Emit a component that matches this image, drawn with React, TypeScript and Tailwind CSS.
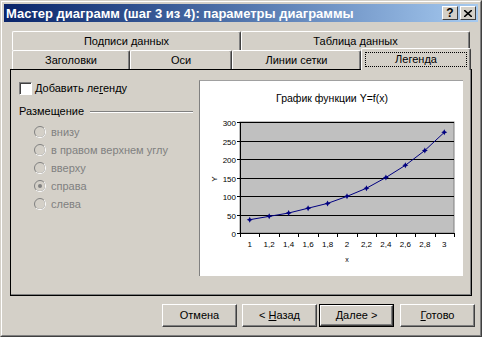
import React from "react";

const vals = [36, 45, 54, 67, 80, 99, 121, 150, 183, 223, 272];
const xLabels = ["1", "1,2", "1,4", "1,6", "1,8", "2", "2,2", "2,4", "2,6", "2,8", "3"];

function Chart() {
  const px0 = 40, pw = 214, py0 = 41, ph = 111;
  const cw = pw / 11;
  const pts = vals.map((v, i) => [px0 + cw * (i + 0.5), py0 + ph - (v * ph) / 300]);
  return (
    <svg width="263" height="195" className="block">
      <text x="132" y="21" fontSize="10.5" textAnchor="middle" fill="#000" fontFamily="Liberation Sans, Arial, sans-serif">График функции Y=f(x)</text>
      <rect x={px0} y={py0} width={pw} height={ph} fill="#C0C0C0" stroke="#808080" strokeWidth="1" />
      {[0, 1, 2, 3, 4, 5, 6].map((k) => (
        <g key={k}>
          <line x1={px0} x2={px0 + pw} y1={Math.round(py0 + k * 18.5) + 0.5} y2={Math.round(py0 + k * 18.5) + 0.5} stroke="#000" strokeWidth="1" />
          <line x1={px0 - 3} x2={px0} y1={Math.round(py0 + k * 18.5) + 0.5} y2={Math.round(py0 + k * 18.5) + 0.5} stroke="#000" strokeWidth="1" />
          <text x={px0 - 4} y={Math.round(py0 + k * 18.5) + 3.5} fontSize="8" textAnchor="end" fill="#000" fontFamily="Liberation Sans, Arial, sans-serif">{300 - k * 50}</text>
        </g>
      ))}
      <line x1={px0 + 0.5} x2={px0 + 0.5} y1={py0} y2={py0 + ph + 1} stroke="#000" />
      {Array.from({ length: 12 }).map((_, k) => (
        <line key={k} x1={Math.round(px0 + cw * k) + 0.5} x2={Math.round(px0 + cw * k) + 0.5} y1={py0 + ph} y2={py0 + ph + 4} stroke="#000" />
      ))}
      {xLabels.map((l, i) => (
        <text key={i} x={px0 + cw * (i + 0.5)} y={166} fontSize="8" textAnchor="middle" fill="#000" fontFamily="Liberation Sans, Arial, sans-serif">{l}</text>
      ))}
      <text x="0" y="0" fontSize="8" textAnchor="middle" fill="#000" fontFamily="Liberation Sans, Arial, sans-serif" transform="translate(17 98) rotate(-90)">Y</text>
      <text x="147" y="181" fontSize="7" textAnchor="middle" fill="#000" fontFamily="Liberation Sans, Arial, sans-serif">x</text>
      <polyline points={pts.map((p) => p.join(",")).join(" ")} fill="none" stroke="#000080" strokeWidth="1" />
      {pts.map(([x, y], i) => (
        <path key={i} d={`M${x},${y - 3} L${x + 1},${y - 1} L${x + 3},${y} L${x + 1},${y + 1} L${x},${y + 3} L${x - 1},${y + 1} L${x - 3},${y} L${x - 1},${y - 1} Z`} fill="#000080" />
      ))}
    </svg>
  );
}

function Radio({ label, checked }: { label: string; checked?: boolean }) {
  return (
    <div className="flex items-center h-[18px]">
      <svg width="12" height="12" className="ml-[15px] shrink-0">
        <circle cx="6" cy="6" r="5.5" fill="#D4D0C8" stroke="#808080" strokeWidth="1" />
        <path d="M2,10 A5.5 5.5 0 0 0 10 2" fill="none" stroke="#FFFFFF" strokeWidth="1" />
        {checked && <circle cx="6" cy="6" r="2" fill="#808080" />}
      </svg>
      <span className="ml-[5px] text-[#808080]">{label}</span>
    </div>
  );
}

function Tab({ w, label, className = "" }: { w: string; label: string; className?: string }) {
  return (
    <div className={`${w} h-[19px] flex items-center justify-center bg-[#D4D0C8] border-t border-l border-r border-t-white border-l-white border-r-[#404040] rounded-t-[2px] shadow-[inset_-1px_0_0_#808080] ${className}`}>
      {label}
    </div>
  );
}

function Btn({ children, def }: { children: React.ReactNode; def?: boolean }) {
  if (def) {
    return (
      <div className="w-[75px] h-[23px] border border-black">
        <div className="w-full h-full border border-t-white border-l-white border-r-[#404040] border-b-[#404040] shadow-[inset_-1px_-1px_0_#808080] flex items-center justify-center">
          <span className="whitespace-pre">{children}</span>
        </div>
      </div>
    );
  }
  return (
    <div className="w-[75px] h-[23px] border border-t-white border-l-white border-r-[#404040] border-b-[#404040] shadow-[inset_-1px_-1px_0_#808080] flex items-center justify-center">
      <span className="whitespace-pre">{children}</span>
    </div>
  );
}

export default function App() {
  return (
    <div className="w-[482px] h-[337px] bg-[#D4D0C8] border border-t-[#D4D0C8] border-l-[#D4D0C8] border-r-[#404040] border-b-[#404040] text-[11px] text-black leading-none" style={{ fontFamily: "'Liberation Sans', Arial, sans-serif" }}>
      <div className="h-full border border-t-white border-l-white border-r-[#808080] border-b-[#808080] p-[2px] flex flex-col">
        <div className="h-[18px] shrink-0 flex items-center bg-gradient-to-r from-[#0A246A] to-[#A6CAF0] pl-[2px] pr-[2px]">
          <span className="text-white font-bold text-[13px] flex-1">Мастер диаграмм (шаг 3 из 4): параметры диаграммы</span>
          <div className="w-[16px] h-[14px] bg-[#D4D0C8] border border-t-white border-l-white border-r-[#404040] border-b-[#404040] flex items-center justify-center font-bold text-[12px]">?</div>
          <div className="w-[16px] h-[14px] ml-[2px] bg-[#D4D0C8] border border-t-white border-l-white border-r-[#404040] border-b-[#404040] flex items-center justify-center">
            <svg width="8" height="7"><path d="M0,0 L8,7 M8,0 L0,7" stroke="#000" strokeWidth="1.6" /></svg>
          </div>
        </div>
        <div className="mt-[9px] ml-[6px] w-[462px] flex flex-col">
          <div className="flex ml-[2px]">
            <Tab w="w-[229px]" label="Подписи данных" />
            <Tab w="w-[229px]" label="Таблица данных" />
          </div>
          <div className="flex ml-[2px] items-end h-[19px]">
            <Tab w="w-[118px]" label="Заголовки" />
            <Tab w="w-[102px]" label="Оси" />
            <Tab w="w-[129px]" label="Линии сетки" />
            <div className="relative z-10 w-[110px] h-[22px] -mb-[1px] bg-[#D4D0C8] border-t border-l border-r border-t-white border-l-white border-r-[#404040] rounded-t-[2px] shadow-[inset_-1px_0_0_#808080] flex items-center justify-center">
              <div className="w-[102px] h-[15px] border border-dotted border-black flex items-center justify-center">Легенда</div>
            </div>
          </div>
          <div className="h-[227px] border border-black shadow-[inset_-1px_-1px_0_#808080] flex">
            <div className="w-[188px] shrink-0 flex flex-col pt-[12px] pl-[8px]">
              <div className="flex items-center h-[13px]">
                <div className="w-[13px] h-[13px] bg-white border border-t-[#808080] border-l-[#808080] border-r-white border-b-white shadow-[inset_1px_1px_0_#404040]" />
                <span className="ml-[3px]">Добавить ле<span className="underline">г</span>енду</span>
              </div>
              <div className="flex items-center mt-[10px] h-[13px]">
                <span>Размещение</span>
                <div className="flex-1 ml-[6px] mr-[6px] h-[2px] border-t border-t-[#808080] border-b border-b-white" />
              </div>
              <div className="mt-[5px] flex flex-col">
                <Radio label="внизу" />
                <Radio label="в правом верхнем углу" />
                <Radio label="вверху" />
                <Radio label="справа" checked />
                <Radio label="слева" />
              </div>
            </div>
            <div className="mt-[10px] w-[264px] h-[196px] bg-white border-t border-l border-t-[#A0A0A0] border-l-[#808080]">
              <Chart />
            </div>
          </div>
        </div>
        <div className="mt-[8px] flex">
          <div className="ml-[158px]"><Btn>Отмена</Btn></div>
          <div className="ml-[5px]"><Btn>{"< "}<span className="underline">Н</span>азад</Btn></div>
          <div className="ml-[2px]"><Btn def><span className="underline">Д</span>алее &gt;</Btn></div>
          <div className="ml-[6px]"><Btn><span className="underline">Г</span>отово</Btn></div>
        </div>
      </div>
    </div>
  );
}
